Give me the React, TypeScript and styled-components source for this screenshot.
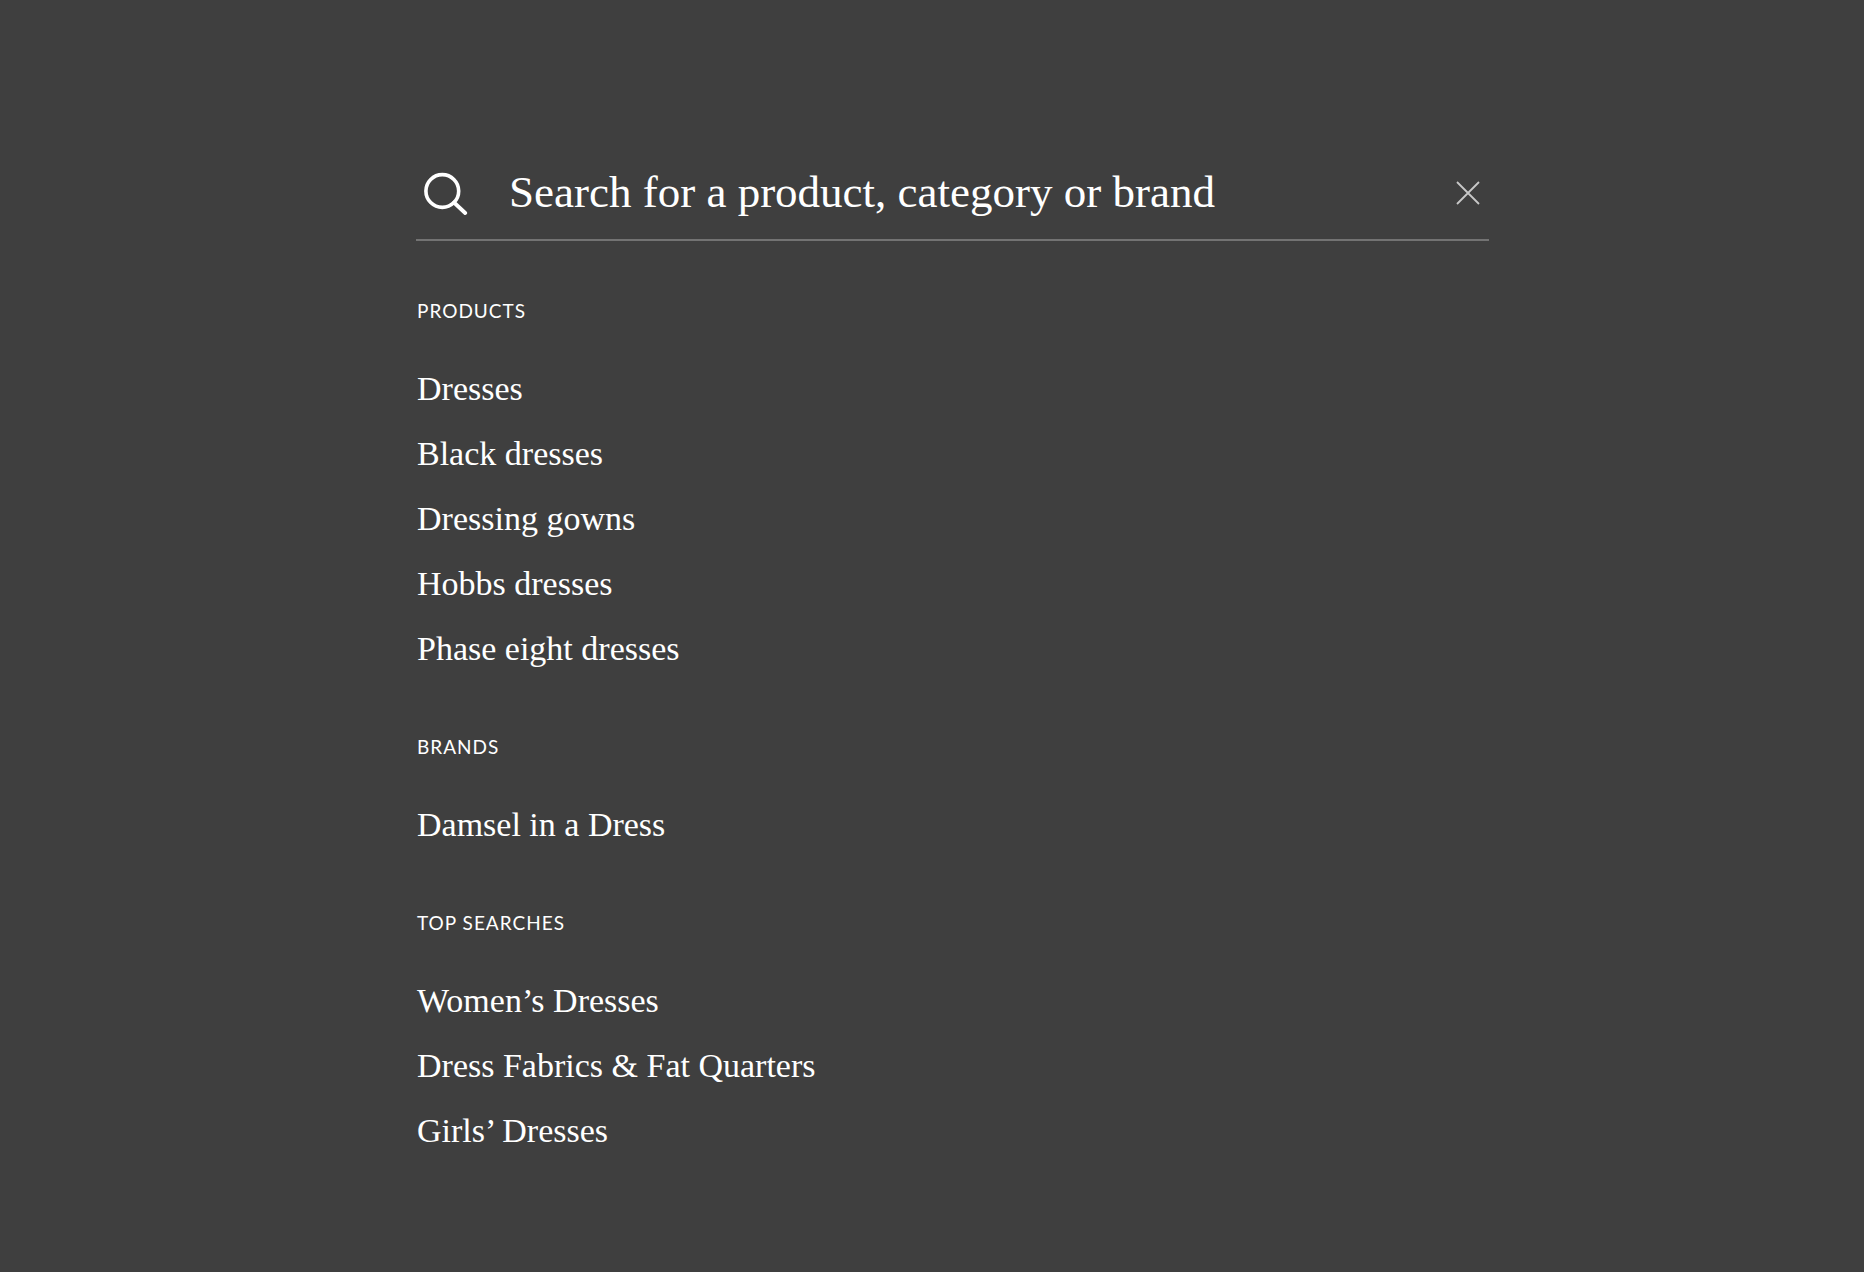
import React, { useRef, useState } from "react";
import styled, { createGlobalStyle } from "styled-components";

const GlobalStyle = createGlobalStyle`
  *, *::before, *::after {
    box-sizing: border-box;
  }

  body {
    margin: 0;
    background: #3f3f3f;
    color: #ffffff;
    font-family: "Liberation Serif", "Times New Roman", serif;
  }
`;

const Overlay = styled.main`
  display: grid;
  grid-template-columns: 416fr 1073fr 375fr;
  min-height: 100vh;
  padding: 147px 0 96px;
  background: #3f3f3f;
`;

const Panel = styled.div`
  grid-column: 2;
  min-width: 0;
`;

const SearchBar = styled.form`
  display: flex;
  align-items: center;
  height: 94px;
  padding: 0 8px;
  border-bottom: 2px solid #737373;
`;

const IconButton = styled.button`
  display: flex;
  flex: none;
  padding: 0;
  border: 0;
  background: none;
  color: ${({ $color }: { $color: string }) => $color};
  cursor: pointer;
`;

const SearchInput = styled.input`
  flex: 1;
  min-width: 0;
  height: 60px;
  margin: 0 24px 0 41px;
  padding: 0 0 2px;
  border: 0;
  outline: 0;
  background: none;
  color: #ffffff;
  font-family: inherit;
  font-size: 45px;

  &::placeholder {
    color: #ffffff;
    opacity: 1;
  }
`;

const Groups = styled.div`
  display: flex;
  flex-direction: column;
  gap: 54px;
  padding: 58px 1px 0;
`;

const GroupTitle = styled.h2`
  margin: 0 0 33px;
  font-family: Lato, "Open Sans", sans-serif;
  font-size: 19px;
  font-weight: 400;
  line-height: 24px;
  letter-spacing: 1px;
  text-transform: uppercase;
`;

const Suggestions = styled.ul`
  margin: 0;
  padding: 0;
  list-style: none;
`;

const Suggestion = styled.li`
  height: 65px;
  line-height: 65px;
  font-size: 34px;
`;

const SuggestionLink = styled.a`
  color: #ffffff;
  text-decoration: none;
`;

const groups = [
  {
    title: "Products",
    items: ["Dresses", "Black dresses", "Dressing gowns", "Hobbs dresses", "Phase eight dresses"],
  },
  { title: "Brands", items: ["Damsel in a Dress"] },
  {
    title: "Top searches",
    items: ["Women’s Dresses", "Dress Fabrics & Fat Quarters", "Girls’ Dresses"],
  },
];

export default function App() {
  const [query, setQuery] = useState("");
  const inputRef = useRef<HTMLInputElement>(null);

  const clear = () => {
    setQuery("");
    inputRef.current?.focus();
  };

  return (
    <>
      <GlobalStyle />
      <Overlay>
        <Panel>
          <SearchBar role="search" onSubmit={(e: React.FormEvent) => e.preventDefault()}>
            <IconButton type="submit" aria-label="Search" $color="#ffffff">
              <svg width="44" height="44" viewBox="0 0 44 44" fill="none" stroke="currentColor" aria-hidden="true">
                <circle cx="18.3" cy="20" r="16.4" strokeWidth="3.6" />
                <path d="M30 31.5 41.2 42" strokeWidth="3.8" strokeLinecap="round" />
              </svg>
            </IconButton>
            <SearchInput
              ref={inputRef}
              type="text"
              aria-label="Search for a product, category or brand"
              placeholder="Search for a product, category or brand"
              value={query}
              onChange={(e: React.ChangeEvent<HTMLInputElement>) => setQuery(e.target.value)}
            />
            <IconButton type="button" aria-label="Clear search" onClick={clear} $color="#c8c8c8">
              <svg width="26" height="26" viewBox="0 0 26 26" fill="none" stroke="currentColor" aria-hidden="true">
                <path d="M2 2 24 24M24 2 2 24" strokeWidth="1.8" />
              </svg>
            </IconButton>
          </SearchBar>
          <Groups>
            {groups.map((group) => (
              <section key={group.title}>
                <GroupTitle>{group.title}</GroupTitle>
                <Suggestions>
                  {group.items.map((item) => (
                    <Suggestion key={item}>
                      <SuggestionLink href="#">{item}</SuggestionLink>
                    </Suggestion>
                  ))}
                </Suggestions>
              </section>
            ))}
          </Groups>
        </Panel>
      </Overlay>
    </>
  );
}
